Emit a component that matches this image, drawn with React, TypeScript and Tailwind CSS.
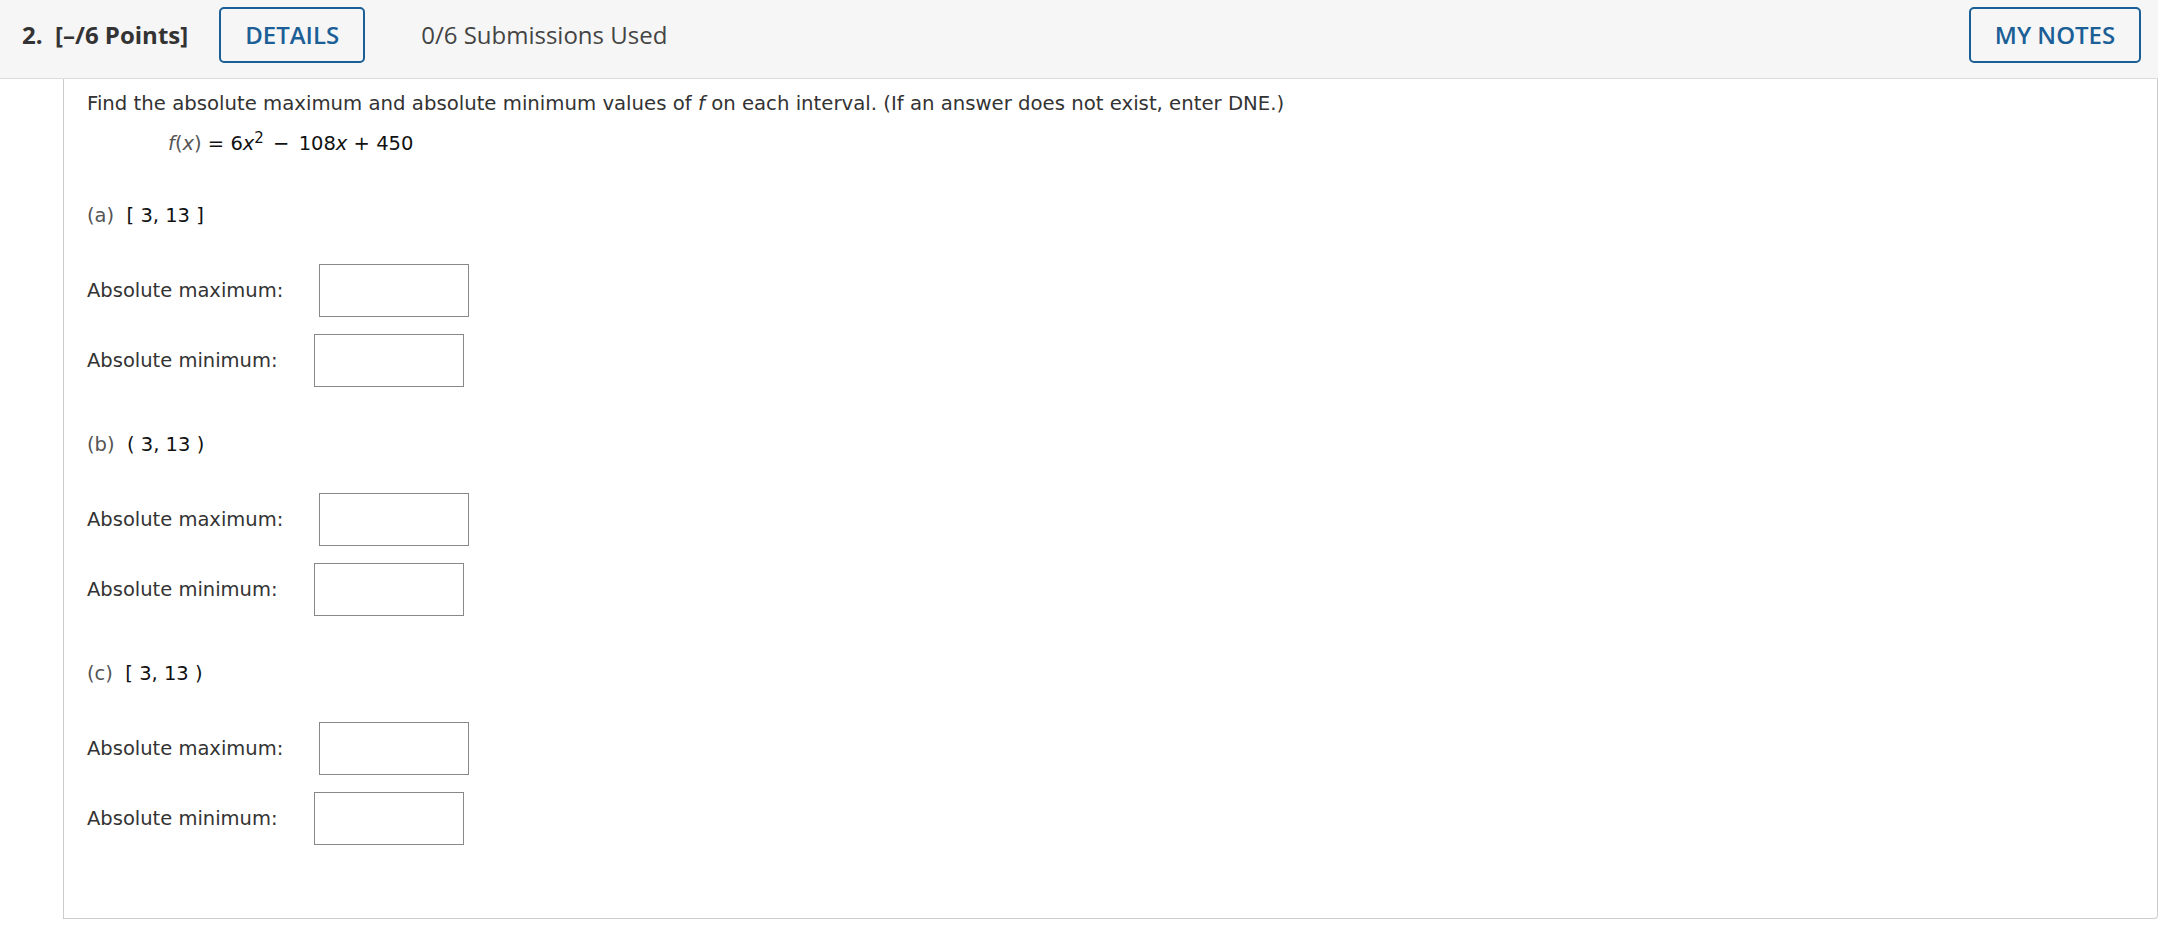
const parts = [
  { tag: '(a)', open: '[', close: ']' },
  { tag: '(b)', open: '(', close: ')' },
  { tag: '(c)', open: '[', close: ')' },
];

function AnswerRow({ label, first }: { label: string; first?: boolean }) {
  return (
    <div className={first ? 'mt-[34px] flex h-[53px] items-center' : 'mt-[17px] flex h-[53px] items-center'}>
      <span className="text-[#333]">{label}</span>
      <input
        type="text"
        className="ml-[36px] h-[53px] w-[150px] border border-[#888] bg-white outline-none"
      />
    </div>
  );
}

export default function App() {
  return (
    <div className="min-h-screen w-full bg-white font-['DejaVu_Sans',Verdana,sans-serif] text-[19.5px] leading-[28px]">
      <header className="flex h-[79px] items-start border-b border-[#dcdcdc] bg-[#f6f6f6] pt-[7px] pl-[22px] pr-[17px] font-['Open_Sans',sans-serif] text-[24px]">
        <span className="whitespace-pre font-bold leading-[56px] text-[#333]">2.  [–/6 Points]</span>
        <button className="ml-[31px] h-[56px] w-[146px] rounded-[5px] border-2 border-[#1b5f96] font-semibold leading-none text-[#1b5f96]">
          DETAILS
        </button>
        <span className="ml-[56px] leading-[56px] text-[#444]">0/6 Submissions Used</span>
        <button className="ml-auto h-[56px] w-[172px] rounded-[5px] border-2 border-[#1b5f96] font-semibold leading-none text-[#1b5f96]">
          MY NOTES
        </button>
      </header>

      <div className="ml-[63px] box-border h-[840px] rounded-br-[4px] border-x border-b border-[#cccccc] pt-[11px] pl-[23px]">
        <p className="text-[19.7px] text-[#333]">
          Find the absolute maximum and absolute minimum values of <i>f</i> on each interval. (If an answer does not exist, enter DNE.)
        </p>
        <p className="mt-[12px] ml-[81px] whitespace-pre text-[#111]">
          <span className="text-[#555]">
            <i>f</i>(<i>x</i>)
          </span>
          {' = 6'}
          <i>x</i>
          <sup className="text-[15px]">2</sup>
          {' '}
          <span className="mx-[3px]">−</span>
          {' 108'}
          <i>x</i>
          {' + 450'}
        </p>

        {parts.map((p) => (
          <div key={p.tag} className="mt-[44px]">
            <p className="whitespace-pre">
              <span className="text-[#555]">{p.tag}  </span>
              <span className="text-[#111]">
                {p.open} 3, 13 {p.close}
              </span>
            </p>
            <AnswerRow label="Absolute maximum:" first />
            <AnswerRow label="Absolute minimum:" />
          </div>
        ))}
      </div>
    </div>
  );
}
